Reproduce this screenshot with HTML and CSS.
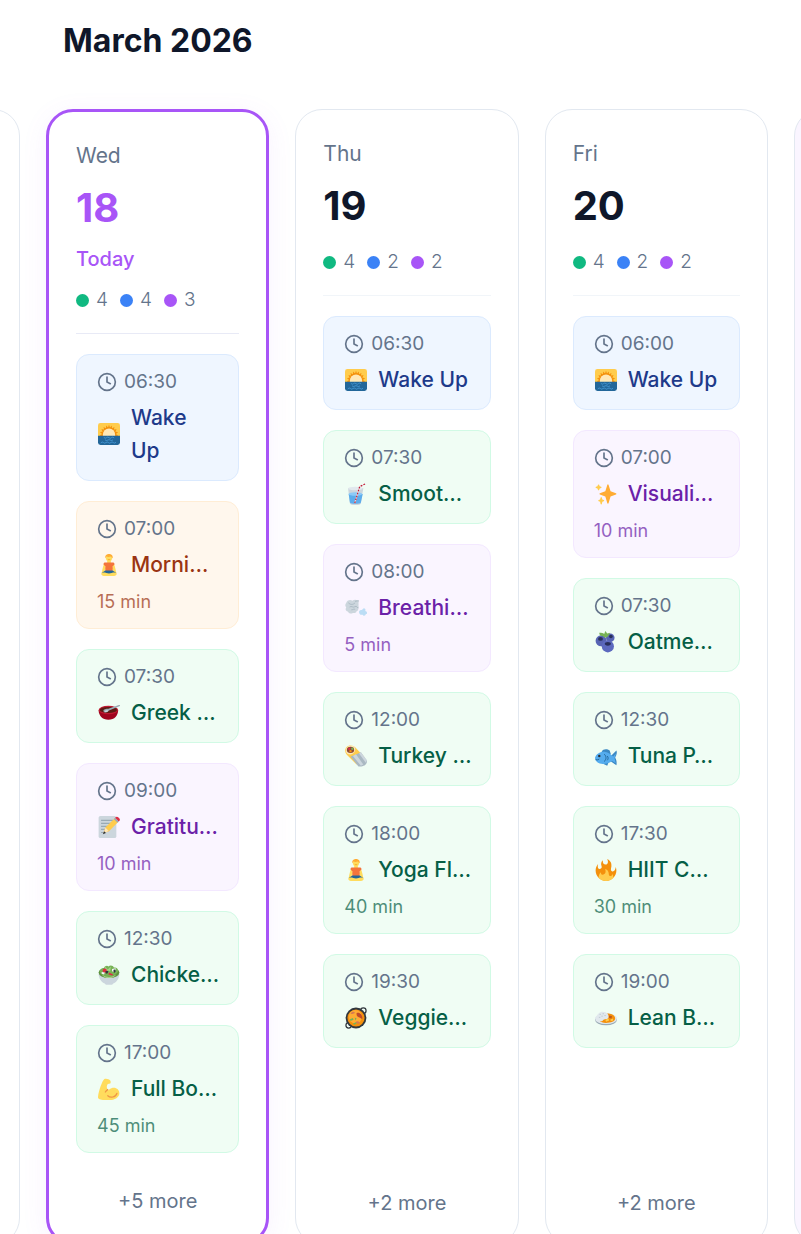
FILE: index.html
```html
<!DOCTYPE html>
<html lang="en">
<head>
  <meta charset="UTF-8">
  <meta name="viewport" content="width=device-width, initial-scale=1.0">
  <title>March 2026</title>
  <link rel="stylesheet" href="styles.css">
</head>
<body>
  <!-- Icon sprite -->
  <svg class="sprite" aria-hidden="true">
    <symbol id="clock" viewBox="0 0 24 24">
      <circle cx="12" cy="12" r="10" fill="none" stroke="currentColor" stroke-width="2"/>
      <path d="M12 6v6l4 2" fill="none" stroke="currentColor" stroke-width="2" stroke-linecap="round" stroke-linejoin="round"/>
    </symbol>
    <symbol id="sunrise" viewBox="0 0 36 36">
      <path fill="#FFCC4D" d="M4 0h28a4 4 0 0 1 4 4v18H0V4a4 4 0 0 1 4-4z"/>
      <path fill="#F4900C" d="M18 3l1.600 4.200L22.600 4l.3 4.500L27 6.400l-1 4.400 4.500-.6-2.200 3.900 4.500 1-3.500 2.900L33 20.500 30 22H6l-3-1.500L6.700 18l-3.500-2.900 4.500-1-2.200-3.900 4.500.6-1-4.400 4.100 2.100.3-4.500 3 3.200z"/>
      <path fill="#FFE8B6" d="M8 22v-3a10 10 0 0 1 20 0v3z"/>
      <path fill="#269" d="M0 21h36v11a4 4 0 0 1-4 4H4a4 4 0 0 1-4-4z"/>
      <path fill="none" stroke="#55ACEE" stroke-width="1" stroke-linecap="round" d="M10 24q2 2 4 0t4 0 4 0 4 0M12 28q2 1.500 4 0t4 0 4 0M5 32q2-2 4 0t4 0 4 0 4 0 4 0 4 0"/>
    </symbol>
    <symbol id="yoga" viewBox="0 0 36 36">
      <path fill="#FFDC5D" d="M15 10h6v6h-6z"/>
      <path fill="#FFDC5D" d="M11 16c-2 1-3 6-4 10l-1 5 3 1 4-8zM25 16c2 1 3 6 4 10l1 5-3 1-4-8z"/>
      <path fill="#F4743B" d="M12 14h12c2 0 3 1 3 3l-3 3v8H12v-8l-3-3c0-2 1-3 3-3z"/>
      <path fill="#269" d="M12 27h12l6 4-6 3H12l-6-3z"/>
      <path fill="#FFDC5D" d="M6 31c3-2 8 0 12 1 4-1 9-3 12-1 2 2-1 5-5 5H11c-4 0-7-3-5-5z"/>
      <circle cx="18" cy="7" r="5" fill="#FFDC5D"/>
      <path fill="#FFAC33" d="M12 7c-1-5 3-7 6-7s7 2 6 7c-2-1-2-3-3-3-3 1-5 1-7 0z"/>
      <path fill="none" stroke="#F4900C" d="M16 9q2 1 4 0"/>
    </symbol>
    <symbol id="bowl" viewBox="0 0 36 36">
      <path fill="#A0041E" d="M1 13c0 9 6 16 16 16s16-7 16-16z"/>
      <ellipse cx="17" cy="13" rx="16" ry="7" fill="#BE1931"/>
      <ellipse cx="17" cy="13" rx="14" ry="5" fill="#5C1A12"/>
      <path fill="#99AAB5" d="M9 15c-1-3 4-4 8-4l17-6c2-1 3 1 1 2l-17 7c-3 4-8 4-9 1z"/>
      <path fill="#CCD6DD" d="M11 15c1-2 5-2 6-1-1 3-5 3-6 1z"/>
    </symbol>
    <symbol id="memo" viewBox="0 0 36 36">
      <rect x="1" y="0" width="29" height="36" rx="3" fill="#CCD6DD"/>
      <path stroke="#99AAB5" stroke-width="2" d="M5 7h20M5 12h16M5 17h12M5 22h8M5 27h6"/>
      <path fill="#F4900C" d="M9 28l3-9 6 6z"/>
      <path fill="#FFCC4D" d="M12 19L27 4l6 6-15 15z"/>
      <path fill="#FFE8B6" d="M12 19l6 6-9 3z"/>
      <path fill="#292F33" d="M8 30l2-5 3 3z"/>
      <path fill="#99AAB5" d="M26 5l2-2 6 6-2 2z"/>
      <path fill="#DD2E44" d="M28 3c2-3 4-2 6 0s3 4 0 6z"/>
    </symbol>
    <symbol id="salad" viewBox="0 0 36 36">
      <path fill="#CCD6DD" d="M1 15c0 9 5 15 10 17l2 2h10l2-2c5-2 10-8 10-17z"/>
      <ellipse cx="18" cy="14" rx="17" ry="9" fill="#5C913B"/>
      <path fill="#77B255" d="M3 13c0-5 4-6 7-6 1-4 5-5 7-3 3-3 8-2 9 2 4-1 7 2 7 6-2 5-7 8-14 8S4 18 3 13z"/>
      <path fill="#A6D388" d="M6 17q12 8 24 0-4 6-12 6T6 17zM11 4l5 5 5-5-1 8-8-1z"/>
      <circle cx="11" cy="11" r="3.500" fill="#DD2E44"/>
      <path fill="#DD2E44" d="M18 14l7 3-2 2-6-2z"/>
      <path fill="#F5F8FA" d="M6 13l5 1-1 3-4-1zM23 8l6-1-1 7-5-2z"/>
      <path fill="#31373D" d="M12 12l5-1-1 4-3 1zM26 9c3-1 4 3 2 5s-4-3-2-5z"/>
    </symbol>
    <symbol id="muscle" viewBox="0 0 36 36">
      <path fill="#FFDC5D" d="M16 10l4-1c1-1 1-4 0-5C18 2 13 0 10 2 7 5 1 20 0 31c0 3 2 4 8 5h14c8-1 13-6 13-11 0-6-5-10-11-9-3 1-5 2-7 4-2-2-4-5-1-10z"/>
      <path fill="none" stroke="#EF9645" stroke-width="2" stroke-linecap="round" d="M16 19c-2 1-3 2-4 4M16 29c4 4 13 3 15-4"/>
    </symbol>
    <symbol id="drink" viewBox="0 0 36 36">
      <path fill="#CCD6DD" d="M5 8l3 25c0 2 4 3 9 3s9-1 9-3l4-25z"/>
      <path fill="#5DADEC" d="M6 18h23l-3 14c0 2-4 2-9 2s-8 0-9-2z"/>
      <ellipse cx="17" cy="18" rx="11" ry="3" fill="#8CCAF7"/>
      <ellipse cx="17" cy="9" rx="12" ry="3" fill="#E1E8ED"/>
      <path fill="none" stroke="#F5F8FA" stroke-width="2" d="M16 33l8-27 10-5"/>
      <path fill="none" stroke="#BE1931" stroke-width="2" stroke-dasharray="3 2" d="M16 33l8-27 10-5"/>
    </symbol>
    <symbol id="wind" viewBox="0 0 36 36">
      <path fill="#CCD6DD" d="M2 10c1-5 7-6 10-4 4-3 9-1 11 1-2 3 0 5-1 8 2 2 0 4-1 4 2 2 0 4-2 4 0 3-4 4-6 3-3 2-7 1-8-2-4-1-5-4-3-7-2-2-2-5 0-7z"/>
      <path fill="none" stroke="#99AAB5" stroke-width="1" stroke-linecap="round" d="M6 10c3 3 7 3 10 0M8 16c3-2 5 2 8 0s4 1 5 2M11 21c2 0 3-2 5-1M17 7l5-1"/>
      <path fill="#BBDDF5" d="M23 24c1-4 5-2 6-4 2-4 6 0 4 3 4 1 4 5 1 5 0 3-4 4-5 1-4 1-6-2-6-5z"/>
    </symbol>
    <symbol id="burrito" viewBox="0 0 36 36">
      <path fill="#FFCC4D" d="M2 4C6-1 14 1 17 4l15 16-13 12L3 16C0 12-1 8 2 4z"/>
      <path fill="#AAB8C2" d="M9 19l8-3 9-4 10 14c0 7-7 10-14 9z"/>
      <path fill="#CCD6DD" d="M13 18l13 16 4-2-12-17zM23 14l11 15 2-4-10-13z"/>
      <ellipse cx="9" cy="8" rx="8" ry="7" transform="rotate(-35 9 8)" fill="#FFE8B6"/>
      <ellipse cx="9" cy="8" rx="6" ry="5" fill="#8A4B38"/>
      <circle cx="7" cy="6" r="2" fill="#DD2E44"/>
      <circle cx="12" cy="6" r="2" fill="#77B255"/>
      <circle cx="9" cy="10" r="2" fill="#F4900C"/>
    </symbol>
    <symbol id="paella" viewBox="0 0 36 36">
      <circle cx="30" cy="6" r="4.500" fill="none" stroke="#31373D" stroke-width="2"/>
      <circle cx="6" cy="30" r="4.500" fill="none" stroke="#31373D" stroke-width="2"/>
      <circle cx="18" cy="18" r="17" fill="#31373D"/>
      <circle cx="18" cy="18" r="14" fill="#F4900C"/>
      <circle cx="17" cy="16" r="11" fill="#FFAC33"/>
      <path fill="#BE4B2B" d="M19 10c5-3 11 4 9 10-3-4-10-2-9-10z"/>
      <path fill="#D67A52" d="M9 11c2-4 6-4 7-2s-4 3-7 2zM17 25c3-3 7-1 7 1s-5 2-7-1z"/>
      <path fill="#77B255" d="M8 20l5-2 1 3-5 2zM16 17l3 2-2 3zM13 27l5-2 1 2-4 2z"/>
    </symbol>
    <symbol id="sparkles" viewBox="0 0 36 36">
      <path fill="#FFAC33" d="M34.347 16.893l-8.899-3.294-3.323-10.891a1 1 0 0 0-1.912 0l-3.322 10.891-8.900 3.294a1 1 0 0 0 0 1.876l8.895 3.293 3.324 11.223a1 1 0 0 0 1.918-.001l3.324-11.223 8.896-3.293a.998.998 0 0 0-.001-1.875z"/>
      <path fill="#FFCC4D" d="M14.347 27.894l-2.314-.856-.9-3.300a.998.998 0 0 0-1.929-.001l-.9 3.300-2.313.856a1 1 0 0 0 0 1.876l2.301.853.907 3.622a1 1 0 0 0 1.940-.001l.907-3.622 2.301-.853a.997.997 0 0 0 0-1.874zM10.009 6.231l-2.364-.875-.876-2.365a.999.999 0 0 0-1.876 0l-.875 2.365-2.365.875a1 1 0 0 0 0 1.876l2.365.875.875 2.365a1 1 0 0 0 1.876 0l.875-2.365 2.365-.875a1 1 0 0 0 0-1.876z"/>
    </symbol>
    <symbol id="berries" viewBox="0 0 36 36">
      <circle cx="25" cy="11" r="7" fill="#5864B4"/>
      <circle cx="10" cy="16" r="9" fill="#5864B4"/>
      <circle cx="21" cy="25" r="10" fill="#5C69BE"/>
      <circle cx="26" cy="9" r="3" fill="#292F5B"/>
      <ellipse cx="9" cy="13" rx="4" ry="3" fill="#292F5B"/>
      <ellipse cx="21" cy="21" rx="5" ry="3" fill="#292F5B"/>
      <path fill="#77B255" d="M7 3c4 0 6 0 8 2l2-5 3 4 5-1-4 6c-3 3-6 2-8-1-4 1-6-1-6-5z"/>
    </symbol>
    <symbol id="fish" viewBox="0 0 36 36">
      <path fill="#3B88C3" d="M11 11c2-5 9-5 13-2l2 6H12zM14 28l8 1-2 5-6-3z"/>
      <path fill="#3B88C3" d="M24 20l11-11c2 5-1 9-2 12 2 3 3 7 2 12l-9-6z"/>
      <path fill="#55ACEE" d="M0 21c2-7 9-11 16-10 6 1 11 5 14 8l4-5c0 3-2 6-2 8 1 3 1 5 2 8l-6-4c-4 3-9 5-15 5C6 31 0 27 0 21z"/>
      <path fill="none" stroke="#269" stroke-width="1.500" d="M15 15c4 3 4 9 0 12M20 18c2 2 2 5 0 7M1 24q4 1 6-1"/>
      <circle cx="7" cy="18" r="2" fill="#292F33"/>
    </symbol>
    <symbol id="fire" viewBox="0 0 36 36">
      <path fill="#F4900C" d="M35 19c0-2.062-.367-4.039-1.040-5.868-.46 5.389-3.333 8.157-6.335 6.868-2.812-1.208-.917-5.917-.777-8.164.236-3.809-.012-8.169-6.931-11.794 2.875 5.500.333 8.917-2.333 9.125-2.958.231-5.667-2.542-4.667-7.042-3.238 2.386-3.332 6.402-2.333 9 1.042 2.708-.042 4.958-2.583 5.208-2.840.28-4.418-3.041-2.963-8.333C2.520 10.965 1 14.805 1 19c0 9.389 7.611 17 17 17s17-7.611 17-17z"/>
      <path fill="#FFCC4D" d="M28.394 23.999c.148 3.084-2.561 4.293-4.019 3.709-2.106-.843-1.541-2.291-2.083-5.291s-2.625-5.083-5.708-6c2.250 6.333-1.247 8.667-3.080 9.084-1.872.426-3.753-.001-3.968-4.007C7.352 23.668 6 26.676 6 30c0 .368.023.73.055 1.090C9.125 34.124 13.342 36 18 36s8.875-1.876 11.945-4.910c.032-.36.055-.722.055-1.090 0-2.187-.584-4.236-1.606-6.001z"/>
    </symbol>
    <symbol id="curry" viewBox="0 0 36 36">
      <ellipse cx="18" cy="21" rx="18" ry="9" fill="#99AAB5"/>
      <ellipse cx="18" cy="19" rx="18" ry="9" fill="#E1E8ED"/>
      <path fill="#F4900C" d="M13 20c0-7 5-11 11-9 6 1 9 4 9 8 0 5-7 7-15 7-5 0-9-2-11-4z"/>
      <path fill="#E1E8ED" d="M3 19c-1-7 5-12 11-11 5 0 9 4 8 9-1 4-7 1-9 5-3 3-9 1-10-3z"/>
      <path fill="#FFCC4D" d="M17 21l5-2 1 3-5 2zM25 21l4-2 1 3-4 1z"/>
      <path fill="#BE5B1A" d="M23 14l5 1-1 4-4-1z"/>
      <path stroke="#AAB8C2" stroke-linecap="round" d="M8 12h1M13 11h1M11 15h1M16 14h1M7 17h1"/>
    </symbol>
  </svg>

  <main class="calendar">
    <h1 class="month">March 2026</h1>

    <div class="week">
      <div class="peek peek-prev"><div class="day"></div></div>

      <section class="day today">
        <header class="day-header">
          <div class="day-name">Wed</div>
          <div class="day-number">18</div>
          <div class="day-today">Today</div>
          <div class="counts">
            <span class="count"><i class="dot dot-green"></i>4</span>
            <span class="count"><i class="dot dot-blue"></i>4</span>
            <span class="count"><i class="dot dot-purple"></i>3</span>
          </div>
        </header>
        <div class="items">
          <article class="item item-blue">
            <div class="time"><svg class="clock"><use href="#clock"/></svg>06:30</div>
            <div class="title"><svg class="emoji"><use href="#sunrise"/></svg><span>Wake<br>Up</span></div>
          </article>
          <article class="item item-orange">
            <div class="time"><svg class="clock"><use href="#clock"/></svg>07:00</div>
            <div class="title"><svg class="emoji"><use href="#yoga"/></svg><span>Morni…</span></div>
            <div class="duration">15 min</div>
          </article>
          <article class="item item-green">
            <div class="time"><svg class="clock"><use href="#clock"/></svg>07:30</div>
            <div class="title"><svg class="emoji"><use href="#bowl"/></svg><span>Greek …</span></div>
          </article>
          <article class="item item-purple">
            <div class="time"><svg class="clock"><use href="#clock"/></svg>09:00</div>
            <div class="title"><svg class="emoji"><use href="#memo"/></svg><span>Gratitu…</span></div>
            <div class="duration">10 min</div>
          </article>
          <article class="item item-green">
            <div class="time"><svg class="clock"><use href="#clock"/></svg>12:30</div>
            <div class="title"><svg class="emoji"><use href="#salad"/></svg><span>Chicke…</span></div>
          </article>
          <article class="item item-green">
            <div class="time"><svg class="clock"><use href="#clock"/></svg>17:00</div>
            <div class="title"><svg class="emoji"><use href="#muscle"/></svg><span>Full Bo…</span></div>
            <div class="duration">45 min</div>
          </article>
        </div>
        <button class="more" type="button">+5 more</button>
      </section>

      <section class="day">
        <header class="day-header">
          <div class="day-name">Thu</div>
          <div class="day-number">19</div>
          <div class="counts">
            <span class="count"><i class="dot dot-green"></i>4</span>
            <span class="count"><i class="dot dot-blue"></i>2</span>
            <span class="count"><i class="dot dot-purple"></i>2</span>
          </div>
        </header>
        <div class="items">
          <article class="item item-blue">
            <div class="time"><svg class="clock"><use href="#clock"/></svg>06:30</div>
            <div class="title"><svg class="emoji"><use href="#sunrise"/></svg><span>Wake Up</span></div>
          </article>
          <article class="item item-green">
            <div class="time"><svg class="clock"><use href="#clock"/></svg>07:30</div>
            <div class="title"><svg class="emoji"><use href="#drink"/></svg><span>Smoot…</span></div>
          </article>
          <article class="item item-purple">
            <div class="time"><svg class="clock"><use href="#clock"/></svg>08:00</div>
            <div class="title"><svg class="emoji"><use href="#wind"/></svg><span>Breathi…</span></div>
            <div class="duration">5 min</div>
          </article>
          <article class="item item-green">
            <div class="time"><svg class="clock"><use href="#clock"/></svg>12:00</div>
            <div class="title"><svg class="emoji"><use href="#burrito"/></svg><span>Turkey …</span></div>
          </article>
          <article class="item item-green">
            <div class="time"><svg class="clock"><use href="#clock"/></svg>18:00</div>
            <div class="title"><svg class="emoji"><use href="#yoga"/></svg><span>Yoga Fl…</span></div>
            <div class="duration">40 min</div>
          </article>
          <article class="item item-green">
            <div class="time"><svg class="clock"><use href="#clock"/></svg>19:30</div>
            <div class="title"><svg class="emoji"><use href="#paella"/></svg><span>Veggie…</span></div>
          </article>
        </div>
        <button class="more" type="button">+2 more</button>
      </section>

      <section class="day">
        <header class="day-header">
          <div class="day-name">Fri</div>
          <div class="day-number">20</div>
          <div class="counts">
            <span class="count"><i class="dot dot-green"></i>4</span>
            <span class="count"><i class="dot dot-blue"></i>2</span>
            <span class="count"><i class="dot dot-purple"></i>2</span>
          </div>
        </header>
        <div class="items">
          <article class="item item-blue">
            <div class="time"><svg class="clock"><use href="#clock"/></svg>06:00</div>
            <div class="title"><svg class="emoji"><use href="#sunrise"/></svg><span>Wake Up</span></div>
          </article>
          <article class="item item-purple">
            <div class="time"><svg class="clock"><use href="#clock"/></svg>07:00</div>
            <div class="title"><svg class="emoji"><use href="#sparkles"/></svg><span>Visuali…</span></div>
            <div class="duration">10 min</div>
          </article>
          <article class="item item-green">
            <div class="time"><svg class="clock"><use href="#clock"/></svg>07:30</div>
            <div class="title"><svg class="emoji"><use href="#berries"/></svg><span>Oatme…</span></div>
          </article>
          <article class="item item-green">
            <div class="time"><svg class="clock"><use href="#clock"/></svg>12:30</div>
            <div class="title"><svg class="emoji"><use href="#fish"/></svg><span>Tuna P…</span></div>
          </article>
          <article class="item item-green">
            <div class="time"><svg class="clock"><use href="#clock"/></svg>17:30</div>
            <div class="title"><svg class="emoji"><use href="#fire"/></svg><span>HIIT C…</span></div>
            <div class="duration">30 min</div>
          </article>
          <article class="item item-green">
            <div class="time"><svg class="clock"><use href="#clock"/></svg>19:00</div>
            <div class="title"><svg class="emoji"><use href="#curry"/></svg><span>Lean B…</span></div>
          </article>
        </div>
        <button class="more" type="button">+2 more</button>
      </section>

      <div class="peek peek-next"><div class="day weekend"></div></div>
    </div>
  </main>
</body>
</html>
```

FILE: styles.css
```css
* {
  margin: 0;
  padding: 0;
  box-sizing: border-box;
}

body {
  font-family: Inter, 'Open Sans', sans-serif;
  background: #fff;
  color: #0f172a;
}

.sprite {
  display: none;
}

.calendar {
  height: 100vh;
  overflow: hidden;
}

.month {
  padding: 17px 63px 44px;
  font-size: 32px;
  line-height: 48px;
  font-weight: 700;
}

/* three full days with the edges of their neighbours on both sides */
.week {
  display: grid;
  grid-template-columns: 20px repeat(3, minmax(0, 1fr)) 7px;
  gap: 26px;
}

.peek {
  display: flex;
  overflow: hidden;
}

.peek-prev {
  justify-content: flex-end;
}

.peek .day {
  flex: 0 0 220px;
}

.day {
  display: flex;
  flex-direction: column;
  padding: 27px;
  background: #fff;
  border: 1px solid #e2e8f0;
  border-radius: 27px;
}

.day.today {
  border: 3px solid #a855f7;
  box-shadow: 0 5px 27px rgba(168, 85, 247, 0.08);
}

.day.weekend {
  background: #faf5ff;
}

.day-header {
  padding-bottom: 19px;
  margin-bottom: 20px;
  border-bottom: 1px solid #f1f5f9;
}

.today .day-header {
  border-bottom-color: #e8eaf6;
}

.day-name {
  font-size: 21px;
  line-height: 34px;
  color: #64748b;
}

.day-number {
  margin-top: 7px;
  font-size: 40px;
  line-height: 56px;
  font-weight: 700;
}

.today .day-number {
  color: #a855f7;
}

.day-today {
  margin-top: 11px;
  font-size: 20px;
  line-height: 25px;
  font-weight: 500;
  color: #a855f7;
}

.counts {
  display: flex;
  gap: 12px;
  margin-top: 14px;
}

.count {
  display: flex;
  align-items: center;
  gap: 7px;
  font-size: 19px;
  line-height: 28px;
  font-weight: 300;
  color: #64748b;
}

.dot {
  width: 13px;
  height: 13px;
  border-radius: 50%;
}

.dot-green {
  background: #10b981;
}

.dot-blue {
  background: #3b82f6;
}

.dot-purple {
  background: #a855f7;
}

.items {
  display: flex;
  flex-direction: column;
  gap: 20px;
  margin-bottom: 35px;
}

.item {
  padding: 13px 20px;
  border: 1px solid;
  border-radius: 13px;
}

.item-blue {
  background: #eff6ff;
  border-color: #dbeafe;
  color: #1e3a8a;
}

.item-green {
  background: #f0fdf4;
  border-color: #d1fae5;
  color: #065f46;
}

.item-purple {
  background: #faf5ff;
  border-color: #f3e8ff;
  color: #6b21a8;
}

.item-orange {
  background: #fff7ed;
  border-color: #ffedd5;
  color: #9a3412;
}

.time {
  display: flex;
  align-items: center;
  gap: 7px;
  font-size: 19px;
  line-height: 27px;
  color: #64748b;
}

.clock {
  width: 20px;
  height: 20px;
}

.title {
  display: flex;
  align-items: center;
  gap: 10px;
  margin-top: 6px;
  font-size: 21px;
  line-height: 33px;
  font-weight: 500;
  white-space: nowrap;
}

.emoji {
  flex: none;
  width: 24px;
  height: 24px;
  padding: 1px;
}

.duration {
  margin-top: 7px;
  font-size: 18px;
  line-height: 27px;
  opacity: 0.7;
}

.more {
  margin-top: auto;
  border: none;
  background: none;
  font-family: inherit;
  font-size: 20px;
  line-height: 27px;
  color: #64748b;
  cursor: pointer;
}
```
